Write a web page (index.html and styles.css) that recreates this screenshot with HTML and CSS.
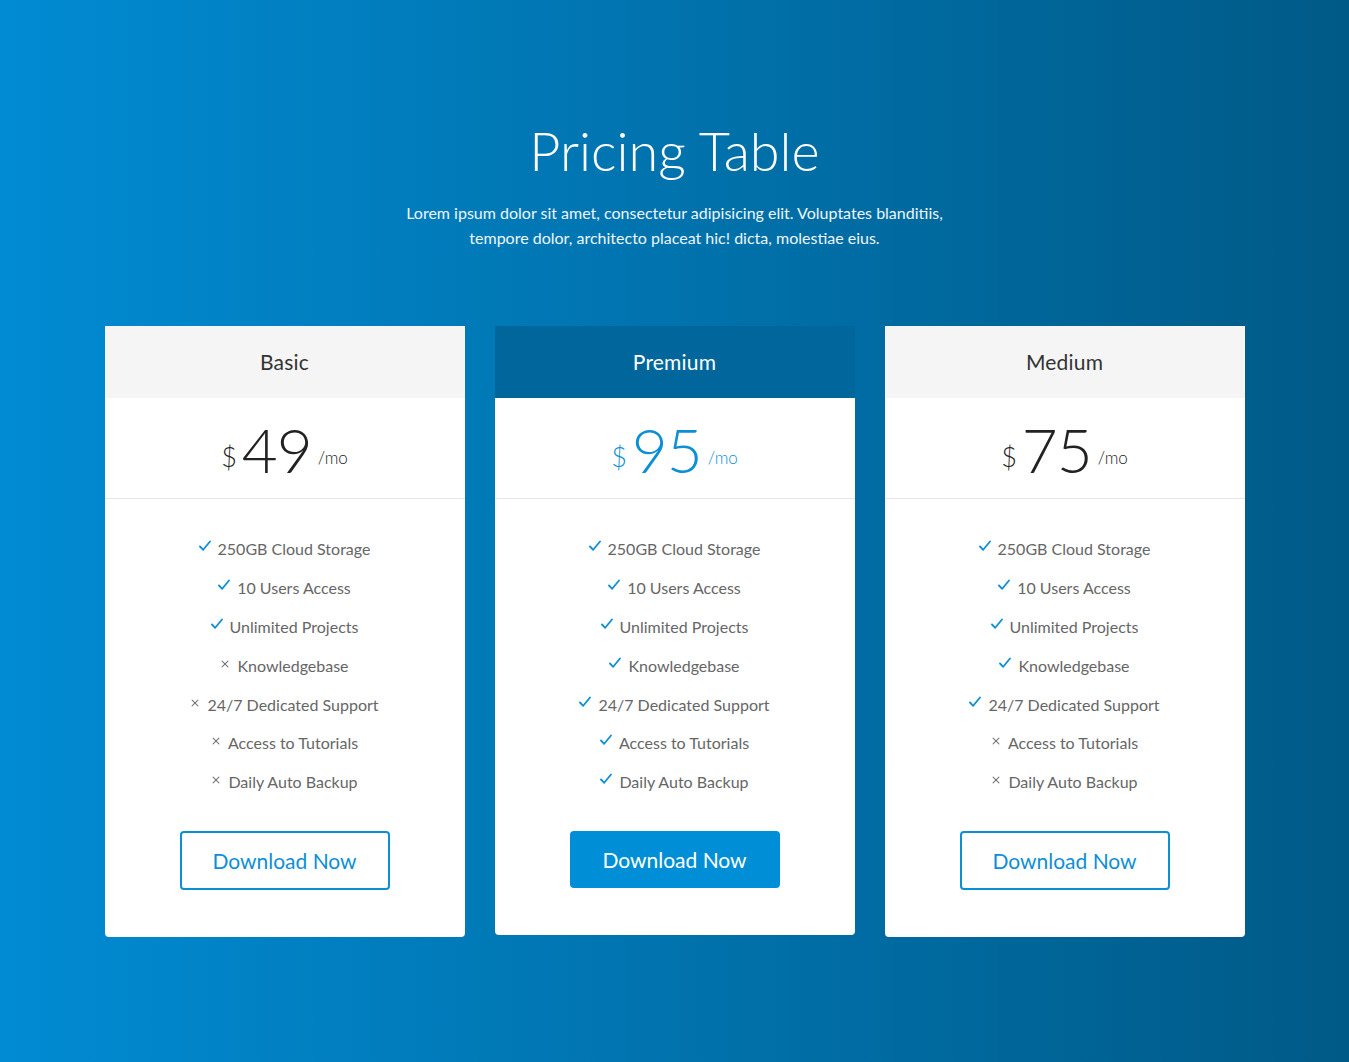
FILE: index.html
```html
<!DOCTYPE html>
<html lang="en">
<head>
<meta charset="utf-8">
<title>Pricing Table</title>
<link rel="stylesheet" href="styles.css">
</head>
<body>
<section class="pricing">
  <header class="intro">
    <h1 class="title">Pricing Table</h1>
    <p class="lead">Lorem ipsum dolor sit amet, consectetur adipisicing elit. Voluptates blanditiis,<br>tempore dolor, architecto placeat hic! dicta, molestiae eius.</p>
  </header>
  <div class="plans">
    <div class="plan">
      <div class="plan-head">Basic</div>
      <div class="plan-price"><span class="cur">$</span><span class="amt">49</span><span class="per">/mo</span></div>
      <ul class="features">
        <li><svg class="ic yes" viewBox="0 0 12 12"><path d="M1 6.5 L4.2 9.8 L11 1.5"/></svg>250GB Cloud Storage</li>
        <li><svg class="ic yes" viewBox="0 0 12 12"><path d="M1 6.5 L4.2 9.8 L11 1.5"/></svg>10 Users Access</li>
        <li><svg class="ic yes" viewBox="0 0 12 12"><path d="M1 6.5 L4.2 9.8 L11 1.5"/></svg>Unlimited Projects</li>
        <li><svg class="ic no" viewBox="0 0 12 12"><path d="M2.5 2.5 L9.5 9.5 M9.5 2.5 L2.5 9.5"/></svg>Knowledgebase</li>
        <li><svg class="ic no" viewBox="0 0 12 12"><path d="M2.5 2.5 L9.5 9.5 M9.5 2.5 L2.5 9.5"/></svg>24/7 Dedicated Support</li>
        <li><svg class="ic no" viewBox="0 0 12 12"><path d="M2.5 2.5 L9.5 9.5 M9.5 2.5 L2.5 9.5"/></svg>Access to Tutorials</li>
        <li><svg class="ic no" viewBox="0 0 12 12"><path d="M2.5 2.5 L9.5 9.5 M9.5 2.5 L2.5 9.5"/></svg>Daily Auto Backup</li>
      </ul>
      <div class="plan-foot"><a class="btn" href="#">Download Now</a></div>
    </div>
    <div class="plan featured">
      <div class="plan-head">Premium</div>
      <div class="plan-price"><span class="cur">$</span><span class="amt">95</span><span class="per">/mo</span></div>
      <ul class="features">
        <li><svg class="ic yes" viewBox="0 0 12 12"><path d="M1 6.5 L4.2 9.8 L11 1.5"/></svg>250GB Cloud Storage</li>
        <li><svg class="ic yes" viewBox="0 0 12 12"><path d="M1 6.5 L4.2 9.8 L11 1.5"/></svg>10 Users Access</li>
        <li><svg class="ic yes" viewBox="0 0 12 12"><path d="M1 6.5 L4.2 9.8 L11 1.5"/></svg>Unlimited Projects</li>
        <li><svg class="ic yes" viewBox="0 0 12 12"><path d="M1 6.5 L4.2 9.8 L11 1.5"/></svg>Knowledgebase</li>
        <li><svg class="ic yes" viewBox="0 0 12 12"><path d="M1 6.5 L4.2 9.8 L11 1.5"/></svg>24/7 Dedicated Support</li>
        <li><svg class="ic yes" viewBox="0 0 12 12"><path d="M1 6.5 L4.2 9.8 L11 1.5"/></svg>Access to Tutorials</li>
        <li><svg class="ic yes" viewBox="0 0 12 12"><path d="M1 6.5 L4.2 9.8 L11 1.5"/></svg>Daily Auto Backup</li>
      </ul>
      <div class="plan-foot"><a class="btn btn-solid" href="#">Download Now</a></div>
    </div>
    <div class="plan">
      <div class="plan-head">Medium</div>
      <div class="plan-price"><span class="cur">$</span><span class="amt">75</span><span class="per">/mo</span></div>
      <ul class="features">
        <li><svg class="ic yes" viewBox="0 0 12 12"><path d="M1 6.5 L4.2 9.8 L11 1.5"/></svg>250GB Cloud Storage</li>
        <li><svg class="ic yes" viewBox="0 0 12 12"><path d="M1 6.5 L4.2 9.8 L11 1.5"/></svg>10 Users Access</li>
        <li><svg class="ic yes" viewBox="0 0 12 12"><path d="M1 6.5 L4.2 9.8 L11 1.5"/></svg>Unlimited Projects</li>
        <li><svg class="ic yes" viewBox="0 0 12 12"><path d="M1 6.5 L4.2 9.8 L11 1.5"/></svg>Knowledgebase</li>
        <li><svg class="ic yes" viewBox="0 0 12 12"><path d="M1 6.5 L4.2 9.8 L11 1.5"/></svg>24/7 Dedicated Support</li>
        <li><svg class="ic no" viewBox="0 0 12 12"><path d="M2.5 2.5 L9.5 9.5 M9.5 2.5 L2.5 9.5"/></svg>Access to Tutorials</li>
        <li><svg class="ic no" viewBox="0 0 12 12"><path d="M2.5 2.5 L9.5 9.5 M9.5 2.5 L2.5 9.5"/></svg>Daily Auto Backup</li>
      </ul>
      <div class="plan-foot"><a class="btn" href="#">Download Now</a></div>
    </div>
  </div>
</section>
</body>
</html>
```
FILE: styles.css
```css
* { box-sizing: border-box; }
html, body { margin: 0; padding: 0; }
body {
  min-height: 1062px;
  background: linear-gradient(to right, #018bd3 0%, #005a87 100%);
  font-family: "Lato", "Liberation Sans", sans-serif;
}
.pricing {
  padding-top: 115px;
  padding-bottom: 125px;
}
.intro { text-align: center; }
.title {
  margin: 0;
  font-family: "Lato", sans-serif;
  font-weight: 300;
  font-size: 54px;
  line-height: 72px;
  color: #fff;
}
.lead {
  margin: 13px 0 0;
  font-size: 16px;
  line-height: 25px;
  color: #eef6fb;
}
.plans {
  width: 1140px;
  margin: 76px auto 0;
  display: flex;
  gap: 30px;
  align-items: flex-start;
}
.plan {
  flex: 1 1 0;
  background: #fff;
  border-radius: 0 0 4px 4px;
  text-align: center;
}
.plan-head {
  height: 72px;
  display: flex;
  align-items: center;
  justify-content: center;
  background: #f5f5f5;
  color: #333;
  font-size: 21px;
  font-weight: 400;
  letter-spacing: 0.2px;
  padding-bottom: 2px;
}
.featured .plan-head {
  background: #00669b;
  color: #fff;
}
.plan-price {
  height: 101px;
  border-bottom: 1px solid #e6e6e6;
  padding-top: 15px;
  color: #222;
  white-space: nowrap;
}
.featured .plan-price { color: #0d8fd6; }
.cur {
  font-size: 27px;
  font-weight: 300;
  margin-right: 5px;
  vertical-align: 6px;
}
.amt {
  font-size: 62px;
  font-weight: 300;
  line-height: 72px;
  letter-spacing: -1px;
}
.per {
  font-size: 17px;
  font-weight: 300;
  margin-left: 6px;
  vertical-align: 9px;
}
.features {
  list-style: none;
  margin: 0;
  padding: 31px 0 0;
}
.features li {
  height: 38.8px;
  line-height: 38px;
  font-size: 16px;
  color: #666;
  display: flex;
  align-items: center;
  justify-content: center;
}
.ic {
  width: 12px;
  height: 12px;
  margin-right: 7px;
  margin-top: -6px;
  fill: none;
  stroke-linecap: round;
  stroke-linejoin: round;
}
.ic.yes { stroke: #0d8fd6; stroke-width: 1.8; }
.ic.no { width: 10px; height: 10px; stroke: #777; stroke-width: 1.3; margin-top: -4px; }
.plan-foot {
  padding: 29px 0 47px;
}
.btn {
  display: inline-block;
  width: 210px;
  height: 59px;
  line-height: 55px;
  border: 2px solid #0d8fd6;
  border-radius: 4px;
  color: #0d8fd6;
  font-size: 21px;
  text-decoration: none;
}
.btn-solid {
  height: 57px;
  line-height: 57px;
  border: 0;
  background: #008fd6;
  color: #fff;
}
```
